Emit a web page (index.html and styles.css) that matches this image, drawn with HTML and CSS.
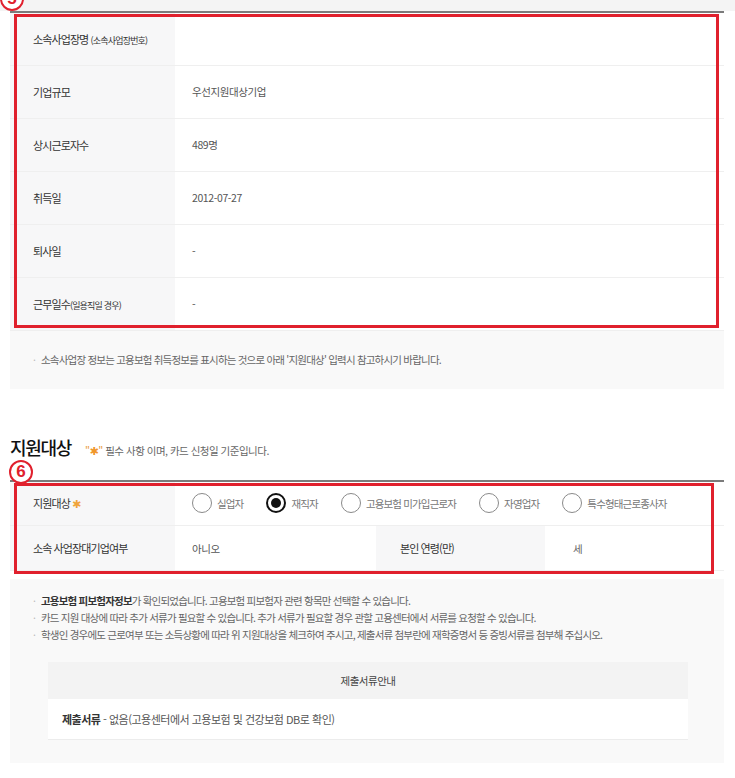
FILE: index.html
```html
<!DOCTYPE html>
<html lang="ko">
<head>
    <meta charset="UTF-8">
    <meta name="viewport" content="width=device-width, initial-scale=1.0">
    <title>지원대상 확인</title>
    <link rel="stylesheet" href="styles.css">
</head>
<body>
<main class="page">
    <div class="top-strip"></div>

    <div class="content">
        <!-- 소속사업장 정보 -->
        <section class="block">
            <div class="sheet">
                <table class="info-table">
                    <tr><th>소속사업장명 <small>(소속사업장번호)</small></th><td></td></tr>
                    <tr><th>기업규모</th><td>우선지원대상기업</td></tr>
                    <tr><th>상시근로자수</th><td>489명</td></tr>
                    <tr><th>취득일</th><td>2012-07-27</td></tr>
                    <tr><th>퇴사일</th><td>-</td></tr>
                    <tr><th>근무일수<small>(일용직일 경우)</small></th><td>-</td></tr>
                </table>
                <span class="mark-box mark-box-info"></span>
                <span class="mark-num mark-num-5">5</span>
            </div>
            <div class="notice">
                <ul class="bullet-list">
                    <li>소속사업장 정보는 고용보험 취득정보를 표시하는 것으로 아래 '지원대상' 입력시 참고하시기 바랍니다.</li>
                </ul>
            </div>
        </section>

        <!-- 지원대상 -->
        <section class="block">
            <h2 class="sec-title">지원대상 <small><em>"<b class="star">✱</b>"</em> 필수 사항 이며, 카드 신청일 기준입니다.</small></h2>
            <div class="sheet">
                <table class="info-table target-table">
                    <tr>
                        <th>지원대상 <em class="req">✱</em></th>
                        <td colspan="3">
                            <div class="radio-group">
                                <label class="radio-item"><span class="radio"></span>실업자</label>
                                <label class="radio-item"><span class="radio checked"></span>재직자</label>
                                <label class="radio-item"><span class="radio"></span>고용보험 미가입근로자</label>
                                <label class="radio-item"><span class="radio"></span>자영업자</label>
                                <label class="radio-item"><span class="radio"></span>특수형태근로종사자</label>
                            </div>
                        </td>
                    </tr>
                    <tr>
                        <th>소속 사업장대기업여부</th>
                        <td class="col-mid">아니오</td>
                        <th class="th-age">본인 연령(만)</th>
                        <td class="td-age">세</td>
                    </tr>
                </table>
                <span class="mark-box mark-box-target"></span>
                <span class="mark-num mark-num-6">6</span>
            </div>

            <div class="notice notice-docs">
                <ul class="bullet-list">
                    <li><strong>고용보험 피보험자정보</strong>가 확인되었습니다. 고용보험 피보험자 관련 항목만 선택할 수 있습니다.</li>
                    <li>카드 지원 대상에 따라 추가 서류가 필요할 수 있습니다. 추가 서류가 필요할 경우 관할 고용센터에서 서류를 요청할 수 있습니다.</li>
                    <li>학생인 경우에도 근로여부 또는 소득상황에 따라 위 지원대상을 체크하여 주시고, 제출서류 첨부란에 재학증명서 등 증빙서류를 첨부해 주십시오.</li>
                </ul>
                <div class="doc-table">
                    <div class="doc-head">제출서류안내</div>
                    <div class="doc-row"><strong>제출서류</strong> - 없음(고용센터에서 고용보험 및 건강보험 DB로 확인)</div>
                </div>
            </div>
        </section>
    </div>
</main>
</body>
</html>
```

FILE: styles.css
```css
* {
    box-sizing: border-box;
}

body {
    margin: 0;
    background: #fff;
    font-family: "Noto Sans CJK KR", "Noto Sans", sans-serif;
    color: #333;
}

.page {
    width: 735px;
}

.top-strip {
    height: 11px;
    background: #f4f4f4;
}

.content {
    padding: 0 11px 0 10px;
}

.sheet {
    position: relative;
}

/* Info tables */
.info-table {
    width: 100%;
    border-collapse: collapse;
    border-top: 2px solid #7b7b7b;
}

.info-table tr {
    border-bottom: 1px solid #efefef;
}

.info-table th {
    width: 165px;
    height: 53px;
    padding: 0 0 0 23px;
    background: #f7f7f8;
    text-align: left;
    font-weight: 400;
    font-size: 11px;
    letter-spacing: -0.9px;
    color: #333;
}

.info-table th small {
    font-size: 9px;
    letter-spacing: -0.8px;
}

.info-table td {
    padding: 0 0 0 17px;
    font-size: 10.5px;
    letter-spacing: -0.4px;
    color: #555;
}

.target-table th,
.target-table td {
    height: 45px;
}

.target-table .col-mid {
    width: 201px;
}

.target-table .th-age {
    width: 169px;
    padding-left: 24px;
}

.target-table .td-age {
    padding-left: 28px;
    color: #666;
}

.req {
    font-style: normal;
    font-family: "DejaVu Sans", sans-serif;
    font-size: 11px;
    color: #f0a43a;
}

/* Radios */
.radio-group {
    display: flex;
    align-items: center;
    gap: 23px;
}

.radio-item {
    display: flex;
    align-items: center;
    gap: 5px;
    font-size: 10.5px;
    letter-spacing: -0.85px;
    color: #777;
}

.radio {
    width: 20px;
    height: 20px;
    border: 1px solid #8a8a8a;
    border-radius: 50%;
    background: #fff;
    display: flex;
    align-items: center;
    justify-content: center;
}

.radio.checked {
    border: 2px solid #111;
}

.radio.checked::after {
    content: "";
    width: 10px;
    height: 10px;
    border-radius: 50%;
    background: #111;
}

/* Annotation overlays */
.mark-box {
    position: absolute;
    border: 3px solid #e0202d;
    pointer-events: none;
}

.mark-box-info {
    top: 3px;
    left: 4px;
    width: 705px;
    height: 314px;
}

.mark-box-target {
    top: 3px;
    left: 4px;
    width: 700px;
    height: 91px;
}

.mark-num {
    position: absolute;
    width: 24px;
    height: 24px;
    border: 2px solid #e0202d;
    border-radius: 50%;
    background: #fff;
    color: #e0202d;
    font-family: "Liberation Sans", Arial, sans-serif;
    font-weight: 700;
    font-size: 17px;
    line-height: 20px;
    text-align: center;
}

.mark-num-5 {
    top: -24px;
    left: -10px;
}

.mark-num-6 {
    top: -20px;
    left: -1px;
}

/* Notices */
.notice {
    background: #f9f9f9;
    padding: 21px 23px;
}

.bullet-list {
    list-style: none;
    margin: 0;
    padding: 0;
}

.bullet-list li {
    position: relative;
    padding-left: 8px;
    font-size: 10.5px;
    line-height: 16px;
    letter-spacing: -0.8px;
    color: #666;
    white-space: nowrap;
}

.bullet-list li::before {
    content: "·";
    position: absolute;
    left: 0;
    color: #bbb;
}

.bullet-list strong {
    color: #333;
}

.notice-docs {
    margin-top: 8px;
    padding: 13px 0 23px;
}

.notice-docs .bullet-list {
    padding-left: 23px;
}

.notice-docs .bullet-list li {
    line-height: 17px;
}

/* Section heading */
.sec-title {
    margin: 46px 0 16px;
    display: flex;
    align-items: baseline;
    gap: 14px;
    font-size: 18px;
    font-weight: 500;
    line-height: 24px;
    letter-spacing: -1.3px;
    color: #111;
}

.sec-title small {
    font-size: 10.5px;
    font-weight: 400;
    letter-spacing: -0.5px;
    color: #666;
}

.sec-title em {
    font-style: normal;
    color: #e99a3a;
}

.sec-title .star {
    font-family: "DejaVu Sans", sans-serif;
    font-weight: 400;
    font-size: 11px;
    color: #f0962a;
}

/* Document guide */
.doc-table {
    margin: 19px 36px 0 38px;
    background: #fff;
    border-bottom: 1px solid #ececec;
}

.doc-head {
    height: 37px;
    line-height: 37px;
    background: #f3f3f3;
    text-align: center;
    font-size: 10.5px;
    letter-spacing: -0.5px;
    color: #444;
}

.doc-row {
    height: 40px;
    line-height: 40px;
    padding-left: 14px;
    font-size: 11px;
    letter-spacing: -0.5px;
    color: #555;
}

.doc-row strong {
    color: #333;
}
```
